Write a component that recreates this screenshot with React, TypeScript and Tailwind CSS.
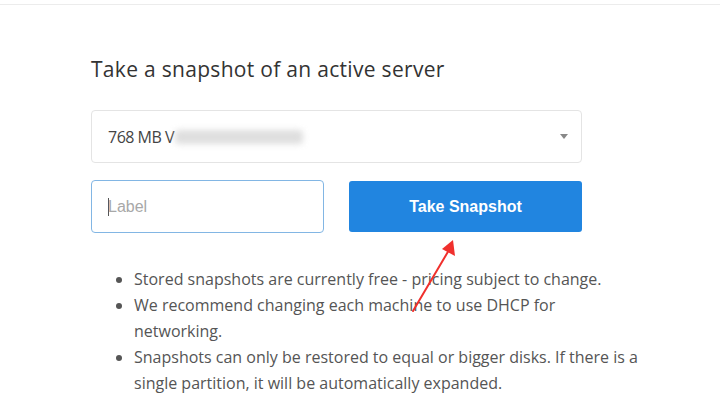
const notes = [
  'Stored snapshots are currently free - pricing subject to change.',
  'We recommend changing each machine to use DHCP for networking.',
  'Snapshots can only be restored to equal or bigger disks. If there is a single partition, it will be automatically expanded.',
]

function Arrow() {
  // red annotation arrow drawn over the page
  return (
    <svg className="absolute left-[405px] top-[234px] pointer-events-none" width="60" height="84" viewBox="0 0 60 84">
      <line x1="8" y1="77" x2="44" y2="16" stroke="#f0302d" strokeWidth="2" strokeLinecap="round" />
      <polygon points="48,6 50,22 37,15" fill="#f0302d" />
    </svg>
  )
}

export default function App() {
  return (
    <div className="relative w-[720px] h-[409px] bg-white overflow-hidden">
      <div className="h-[5px] border-b border-[#ececec]" />
      <div className="pl-[91px] pt-[50px]">
        <h2 className="text-[21px] leading-[28px] text-[#333] font-['Open_Sans',sans-serif] tracking-[0.3px]">
          Take a snapshot of an active server
        </h2>

        <div className="mt-[27px] w-[491px] h-[53px] flex items-center justify-between px-[16px] border border-[#e4e4e4] rounded-[4px]">
          <div className="flex items-center text-[16px] text-[#444] font-['Open_Sans',sans-serif] tracking-[-0.5px]">
            <span>768 MB V</span>
            <span className="ml-[1px] h-[14px] w-[128px] bg-[#d6d6d6] blur-[3px] rounded-sm opacity-80" />
          </div>
          <span className="w-0 h-0 border-l-[4px] border-r-[4px] border-t-[5px] border-l-transparent border-r-transparent border-t-[#888] mr-[-3px]" />
        </div>

        <div className="mt-[17px] w-[491px] flex gap-[25px]">
          <div className="w-[233px] h-[53px] border border-[#82b6e4] rounded-[4px] flex items-center px-[16px]">
            <span className="w-px h-[18px] bg-[#555]" />
            <span className="ml-[-1px] text-[16px] text-[#a8a8a8] font-['Liberation_Sans',sans-serif]">Label</span>
          </div>
          <button className="w-[233px] h-[51px] mt-[1px] bg-[#2185e0] rounded-[3px] text-white text-[16px] font-bold font-['Liberation_Sans',sans-serif]">
            Take Snapshot
          </button>
        </div>

        <ul className="mt-[33px] w-[554px] pl-[43px] list-disc marker:text-[#555] text-[16px] leading-[26px] text-[#555] font-['Open_Sans',sans-serif]">
          {notes.map(n => (
            <li key={n}>{n}</li>
          ))}
        </ul>
      </div>
      <Arrow />
    </div>
  )
}
